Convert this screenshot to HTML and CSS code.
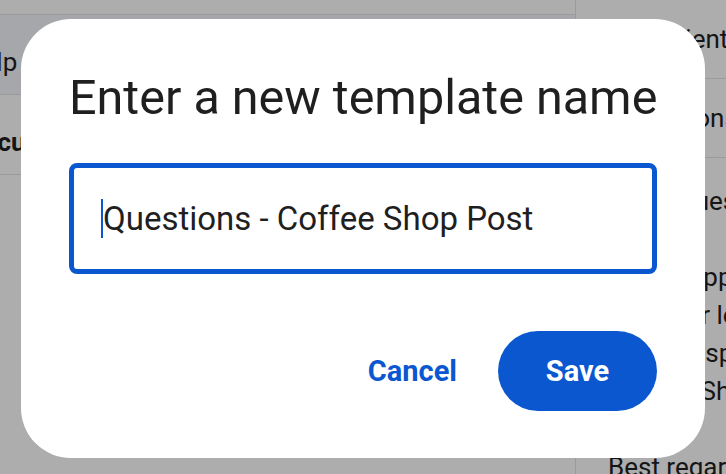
FILE: index.html
```html
<!DOCTYPE html>
<html lang="en">
<head>
<meta charset="utf-8">
<title>Enter a new template name</title>
<link rel="stylesheet" href="styles.css">
</head>
<body>
<div class="page">
  <div class="left">
    <div class="strip"></div>
    <div class="row row-active"><span class="cell">Help</span></div>
    <div class="row"><span class="cell bold">Documents</span></div>
  </div>
  <div class="right">
    <div class="field"><span class="fld-text">Recipient</span></div>
    <div class="field"><span class="fld-text">Questions</span></div>
    <div class="body-text">
      <p>A few questions about your post:</p>
      <p class="blank">&nbsp;</p>
      <p>I'd be happy to help.</p>
      <p>Can your location host events?</p>
      <p>A fast response would be great.</p>
      <p>See the Shop post for details.</p>
      <p class="blank">&nbsp;</p>
      <p>Best regards,</p>
    </div>
  </div>
</div>
<div class="scrim"></div>
<div class="dialog" role="dialog" aria-labelledby="dlg-title">
  <h1 id="dlg-title" class="dialog-title">Enter a new template name</h1>
  <div class="input-box">
    <span class="caret"></span><span class="input-text">Questions - Coffee Shop Post</span>
  </div>
  <div class="actions">
    <button class="btn-text">Cancel</button>
    <button class="btn-filled">Save</button>
  </div>
</div>
</body>
</html>
```
FILE: styles.css
```css
* { box-sizing: border-box; }
html, body { margin: 0; padding: 0; }
body {
  width: 726px;
  height: 474px;
  overflow: hidden;
  position: relative;
  font-family: Roboto, "Noto Sans", Arial, sans-serif;
  color: #1f1f1f;
  background: #fff;
}
.page {
  display: grid;
  grid-template-columns: 576px 1fr;
  height: 474px;
}
.left {
  border-right: 1px solid #e3e3e3;
  overflow: hidden;
  background: #fff;
}
.strip {
  height: 15px;
  background: #fff;
  border-bottom: 1px solid #e1e3e6;
}
.row {
  height: 80px;
  border-bottom: 1px solid #e1e3e6;
  display: flex;
  align-items: center;
  padding-top: 14px;
  font-size: 26px;
}
.row-active { background: #f5f7fb; }
.cell { margin-left: -36px; white-space: nowrap; }
.bold { font-weight: 700; margin-left: -34px; }
.right {
  overflow: hidden;
  background: #fff;
  font-size: 26px;
}
.field {
  height: 79px;
  border-bottom: 1px solid #e3e3e3;
  display: flex;
  align-items: center;
  padding-left: 45px;
  white-space: nowrap;
}
.body-text { padding: 24px 0 0 32px; }
.body-text p {
  margin: 0;
  line-height: 38px;
  white-space: nowrap;
}
.scrim {
  position: absolute;
  inset: 0;
  background: rgba(0, 0, 0, 0.32);
}
.dialog {
  position: absolute;
  left: 21px;
  top: 19px;
  width: 684px;
  height: 439px;
  background: #fff;
  border-radius: 50px;
  padding: 48px 48px 47px;
  display: flex;
  flex-direction: column;
}
.dialog-title {
  margin: 3px 0 0;
  font-weight: 400;
  font-size: 48.5px;
  line-height: 56px;
  color: #1f1f1f;
  white-space: nowrap;
}
.input-box {
  margin-top: 37px;
  height: 111px;
  border: 5px solid #0b57d0;
  border-radius: 8px;
  display: flex;
  align-items: center;
  padding-left: 27px;
}
.caret {
  width: 2px;
  height: 39px;
  background: #0b57d0;
}
.input-text {
  font-size: 33px;
  color: #1f1f1f;
  white-space: nowrap;
}
.actions {
  margin-top: auto;
  display: flex;
  justify-content: flex-end;
  align-items: center;
  gap: 41px;
}
button {
  font-family: inherit;
  border: none;
  cursor: pointer;
}
.btn-text {
  background: none;
  color: #0b57d0;
  font-size: 29px;
  font-weight: 700;
  padding: 0;
}
.btn-filled {
  background: #0b57d0;
  color: #fff;
  font-size: 29px;
  font-weight: 700;
  width: 159px;
  height: 80px;
  border-radius: 40px;
}
```
